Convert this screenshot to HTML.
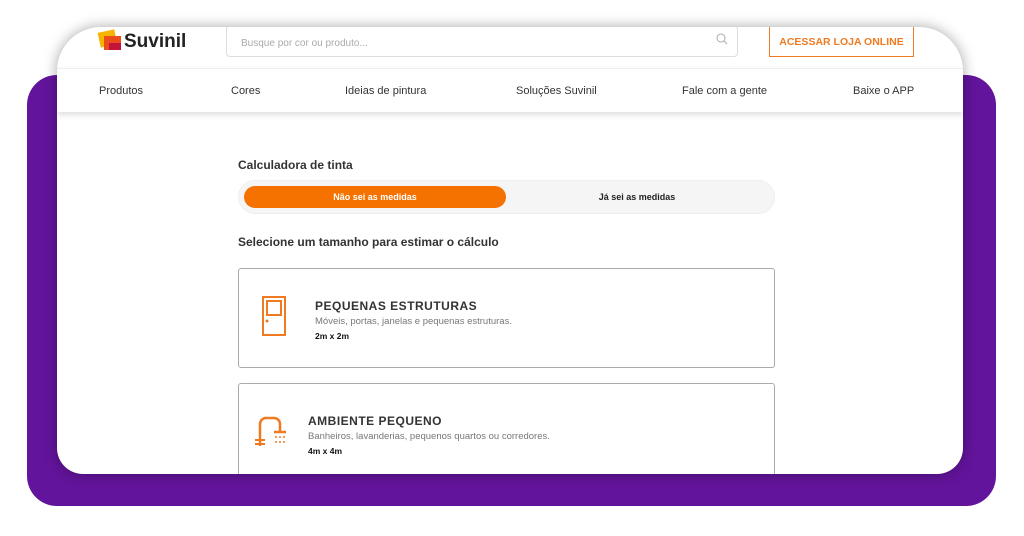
<!DOCTYPE html>
<html><head><meta charset="utf-8"><style>
*{margin:0;padding:0;box-sizing:border-box}
body{width:1024px;height:536px;background:#fff;position:relative;overflow:hidden;font-family:"Liberation Sans",sans-serif;color:#333}
.purple{position:absolute;left:27px;top:75px;width:969px;height:431px;background:#63149c;border-radius:30px}
.card{position:absolute;left:57px;top:27px;width:906px;height:447px;background:#fff;border-radius:44px 44px 26px 26px;overflow:hidden;box-shadow:0 0 14px rgba(0,0,0,.35)}
.abs{position:absolute}
.search{left:169px;top:-2px;width:512px;height:32px;border:1px solid #ddd;border-radius:4px;font-size:10px;color:#aaa;padding:12px 0 0 14px}
.btn{left:712px;top:-2px;width:145px;height:32px;border:1.5px solid #f07a22;color:#f07a22;font-size:10.5px;font-weight:bold;text-align:center;padding-top:10px}
.navbar{left:0;top:41px;width:906px;height:44px;border-top:1px solid #eee;box-shadow:0 3px 5px rgba(0,0,0,.12);font-size:11px;color:#333}
.navbar span{position:absolute;top:16px}
.box{border:1px solid #aaa;border-radius:3px;left:181px;width:537px;background:#fff}
h4{font-size:12px;letter-spacing:.5px;color:#333}
.d{font-size:9.5px;color:#777;margin-top:3px}
.s{font-size:8.5px;font-weight:bold;color:#111;margin-top:4px}
</style></head><body>
<div class="purple"></div>
<div class="card">
 <div class="abs" style="left:42px;top:4px;width:17px;height:15px;background:#f5b400;transform:rotate(-12deg)"></div>
 <div class="abs" style="left:47px;top:9px;width:17px;height:14px;background:#ec4c1c"></div>
 <div class="abs" style="left:52px;top:16px;width:12px;height:7px;background:#c4143c"></div>
 <div class="abs" style="left:67px;top:4px;font-size:19px;font-weight:bold;color:#222">Suvinil</div>
 <div class="abs search">Busque por cor ou produto...
  <svg class="abs" style="left:489px;top:7px" width="12" height="12" viewBox="0 0 12 12"><circle cx="5" cy="5" r="4" fill="none" stroke="#aaa"/><path d="M8 8l3 3" stroke="#aaa"/></svg></div>
 <div class="abs btn">ACESSAR LOJA ONLINE</div>
 <div class="abs navbar">
  <span style="left:42px">Produtos</span><span style="left:174px">Cores</span><span style="left:288px">Ideias de pintura</span><span style="left:459px">Soluções Suvinil</span><span style="left:625px">Fale com a gente</span><span style="left:796px">Baixe o APP</span>
 </div>
 <div class="abs" style="left:181px;top:131px;font-size:12px;font-weight:bold">Calculadora de tinta</div>
 <div class="abs" style="left:181px;top:153px;width:537px;height:34px;background:#f5f5f5;border-radius:17px;border:1px solid #eee"></div>
 <div class="abs" style="left:187px;top:159px;width:262px;height:22px;background:#f57200;border-radius:11px;color:#fff;font-size:9px;font-weight:bold;text-align:center;padding-top:6px">Não sei as medidas</div>
 <div class="abs" style="left:449px;top:165px;width:262px;font-size:9px;font-weight:bold;text-align:center;color:#222">Já sei as medidas</div>
 <div class="abs" style="left:181px;top:208px;font-size:12px;font-weight:bold">Selecione um tamanho para estimar o cálculo</div>
 <div class="abs box" style="top:241px;height:100px">
  <svg class="abs" style="left:23px;top:27px" width="24" height="40" viewBox="0 0 24 40"><rect x="1" y="1" width="22" height="38" fill="none" stroke="#f07a22" stroke-width="2"/><rect x="5" y="5" width="14" height="14" fill="none" stroke="#f07a22" stroke-width="2"/><circle cx="5" cy="25" r="1.5" fill="#f07a22"/></svg>
  <div class="abs" style="left:76px;top:30px"><h4>PEQUENAS ESTRUTURAS</h4><div class="d">Móveis, portas, janelas e pequenas estruturas.</div><div class="s">2m x 2m</div></div>
 </div>
 <div class="abs box" style="top:356px;height:100px">
  <svg class="abs" style="left:15px;top:32px" width="34" height="32" viewBox="0 0 34 32"><path d="M6 30V8a6 6 0 0 1 6-6h8a6 6 0 0 1 6 6v4" fill="none" stroke="#f07a22" stroke-width="2.5"/><path d="M20 16h12M26 12v4" stroke="#f07a22" stroke-width="2.5"/><path d="M1 24h10M1 28h10" stroke="#f07a22" stroke-width="2"/><path d="M22 20v2M26 20v2M30 20v2M22 25v2M26 25v2M30 25v2" stroke="#f07a22" stroke-width="1.5"/></svg>
  <div class="abs" style="left:69px;top:30px"><h4>AMBIENTE PEQUENO</h4><div class="d">Banheiros, lavanderias, pequenos quartos ou corredores.</div><div class="s">4m x 4m</div></div>
 </div>
</div>
</body></html>
